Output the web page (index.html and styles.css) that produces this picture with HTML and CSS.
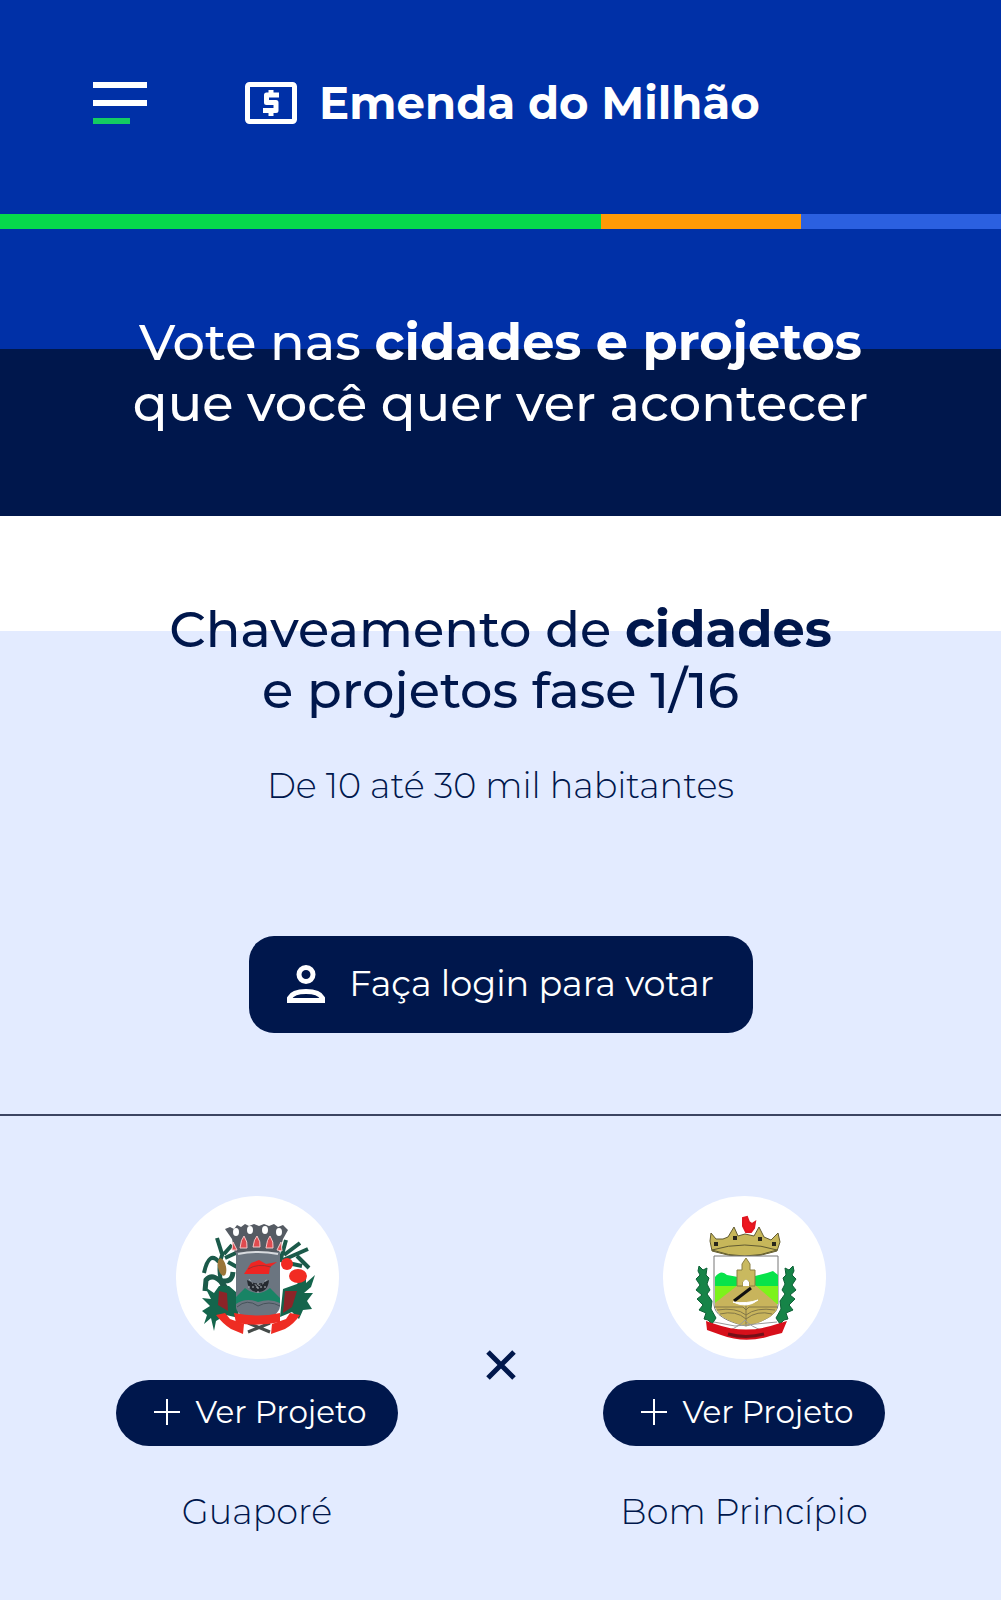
FILE: index.html
```
<!DOCTYPE html>
<html lang="pt-BR">
<head>
  <meta charset="UTF-8">
  <meta name="viewport" content="width=device-width, initial-scale=1.0">
  <title>Emenda do Milhão</title>
  <link rel="stylesheet" href="styles.css">
</head>
<body>
  <header class="topbar">
    <button class="menu" type="button" aria-label="Abrir menu">
      <span></span>
      <span></span>
      <span class="short"></span>
    </button>
    <a class="brand" href="#">
      <svg class="brand-icon" viewBox="0 0 52 42" aria-hidden="true">
        <rect x="2.500" y="2.500" width="47" height="37" rx="2" fill="none" stroke="#fff" stroke-width="5"/>
        <path d="M34 13H21.500V20.500H31V28.500H18M26 8V13M26 29V34" fill="none" stroke="#fff" stroke-width="5" stroke-linejoin="round"/>
      </svg>
      Emenda do Milhão
    </a>
  </header>

  <div class="stripe">
    <span class="green"></span>
    <span class="orange"></span>
    <span class="blue"></span>
  </div>

  <main>
    <section class="hero">
      <h1>Vote nas <strong>cidades e projetos</strong><br>que você quer ver acontecer</h1>
    </section>

    <section class="bracket">
      <h2>Chaveamento de <strong>cidades</strong><br>e projetos fase 1/16</h2>
      <p class="range">De 10 até 30 mil habitantes</p>
      <button class="login" type="button">
        <svg class="login-icon" viewBox="0 0 38 38" aria-hidden="true">
          <circle cx="19" cy="9.500" r="7" fill="none" stroke="#fff" stroke-width="5"/>
          <path d="M2.500 35.500V33C5 28 12 26.500 19 26.500S33 28 35.500 33V35.500Z" fill="none" stroke="#fff" stroke-width="5"/>
        </svg>
        Faça login para votar
      </button>
    </section>

    <section class="match">
      <div class="city">
        <div class="crest">
          <svg viewBox="0 0 163 163" role="img" aria-label="Brasão de Guaporé">
            <!-- milho e folhas -->
            <g fill="none" stroke="#1b5a4a" stroke-width="4">
              <path d="M47 92Q40 72 47 57M43 66Q33 54 28 77M46 58L41 42M48 58L56 49M49 62L62 56M52 66L61 71"/>
              <path d="M50 92Q38 75 30 84L29 95M44 84Q56 88 57 76" stroke-width="5"/>
              <path d="M104 66L110 44M108 59L124 47M107 64L132 53M121 60L133 72M107 66L126 70"/>
            </g>
            <g fill="#14654c">
              <path d="M53 90L60 96L63 122L50 119L40 125L38 135L35 122L28 128L31 119L26 115L34 110L26 102L35 103L29 91L38 97L43 90Z"/>
              <path d="M107 93L121 88L130 77L130 87L139 79L135 91L128 97L137 97L131 105L136 113L127 114L123 123L116 116L104 121Z"/>
            </g>
            <ellipse cx="46" cy="71" rx="4" ry="9" fill="#9b7538" transform="rotate(-12 46 71)"/>
            <path d="M43 95L51 97L52 115L42 109Z" fill="#8c2428"/>
            <path d="M109 95L121 95L116 111L107 117Z" fill="#8c2428"/>
            <circle cx="111" cy="68" r="6" fill="#f22b22"/>
            <ellipse cx="122" cy="80" rx="9" ry="7" fill="#f22b22"/>
            <!-- coroa -->
            <path d="M49 33L54 31L58 33L61 29L65 31L69 28L73 30L78 28L83 30L88 28L93 30L98 28L102 31L107 29L112 34L107 43L103 57H59L56 43Z" fill="#555b63"/>
            <g fill="#fff">
              <ellipse cx="60" cy="36" rx="3" ry="4"/><ellipse cx="74" cy="34" rx="3" ry="4"/>
              <ellipse cx="89" cy="34" rx="3" ry="4"/><ellipse cx="103" cy="36" rx="3" ry="4"/>
            </g>
            <g fill="#e04b4f" stroke="#f1c7c9">
              <path d="M64 52Q65 43 68 40Q72 46 71 52Z"/><path d="M77 51Q78 43 81 40Q85 46 84 51Z"/><path d="M90 52Q91 43 94 40Q98 46 97 52Z"/><path d="M101 54L105 46L106 55Z"/><path d="M56 54L57 46L61 54Z"/>
            </g>
            <!-- escudo -->
            <path d="M60 56H104V110Q103 121 82 126Q62 121 60 112Z" fill="#6b7580"/>
            <path d="M62 58Q82 54 102 58" fill="none" stroke="#d8dbdf" stroke-width="2"/>
            <path d="M68 78L75 67L83 64L90 68L101 66L94 71L93 78Z" fill="#ee2523"/>
            <path d="M72 73Q82 67 95 71" fill="none" stroke="#9d3030"/>
            <path d="M71 84Q82 91 93 84Q92 96 82 96T71 84Z" fill="#252a30"/>
            <path d="M73 83Q82 96 91 83M72 91H92M82 87V97" fill="none" stroke="#b2b8be" stroke-dasharray="2 2"/>
            <path d="M60 101L69 92Q82 102 94 92L104 102V107Q94 102 82 106Q70 101 60 108Z" fill="#188465"/>
            <path d="M61 111Q71 102 82 110Q93 104 104 110" fill="none" stroke="#46535b"/>
            <!-- faixa -->
            <path d="M72 136L94 127M72 127L94 136" stroke="#454b49" stroke-width="3"/>
            <path d="M58 117Q82 122 104 117V126Q82 131 60 127Z" fill="#ee2c23"/>
            <path d="M40 119L49 117L54 123L68 128L67 138L55 133Q47 128 40 119Z" fill="#ee2c23"/>
            <path d="M124 119L114 117L110 123L96 128L95 138L109 133Q118 128 124 119Z" fill="#ee2c23"/>
          </svg>
        </div>
        <a class="project" href="#">
          <svg class="plus" viewBox="0 0 26 26" aria-hidden="true"><path d="M13 0V26M0 13H26" stroke="#fff" stroke-width="2"/></svg>
          Ver Projeto
        </a>
        <p class="name">Guaporé</p>
      </div>

      <svg class="versus" viewBox="0 0 30 30" role="img" aria-label="contra"><path d="M2 2L28 28M28 2L2 28" stroke="#00174c" stroke-width="5"/></svg>

      <div class="city">
        <div class="crest">
          <svg viewBox="0 0 163 163" role="img" aria-label="Brasão de Bom Princípio">
            <!-- galo -->
            <path d="M80 22L84 21L86 26L89 28L92 26L91 32L88 36H83L80 30Z" fill="#ee161f" stroke="#e01620" stroke-width="2"/>
            <!-- coroa -->
            <g fill="#c7b75a" stroke="#615b32">
              <path d="M48 37L53 43L60 43L65 41L71 31L75 40L82 38L91 40L96 31L101 41L108 44L115 37L117 46L114 55Q82 66 49 55L47 45Z"/>
              <path d="M49 54Q82 44 114 54Q82 66 49 54Z"/>
            </g>
            <path d="M51 48H55M70 42H74M95 43H99M109 48H113" stroke="#29271b" stroke-width="4"/>
            <!-- escudo -->
            <path d="M51 60H115V109Q114 122 83 130Q52 123 51 109Z" fill="#fff" stroke="#777"/>
            <path d="M52 81Q58 73 64 79L75 81L92 80L104 77L110 75L115 79V90H52Z" fill="#08e34a"/>
            <path d="M52 90H115V108H52Z" fill="#7cf31b"/>
            <path d="M75 89H92L114 108V113Q109 124 83 130Q56 124 52 111V107Z" fill="#c8b45c"/>
            <path d="M74 90V74H79V68L83 62L87 68V74H92V90H86V86Q83 82 80 86V90Z" fill="#c9b95f" stroke="#8a7e42"/>
            <path d="M80 90V86Q83 81 86 86V90Z" fill="#fff"/>
            <path d="M52 111H80L83 114L86 111H114M54 114Q73 111 83 119Q93 111 112 114M57 118Q73 114 83 123Q94 114 109 118M83 108V130" fill="none" stroke="#827747"/>
            <path d="M71 105L88 92" stroke="#111" stroke-width="3"/>
            <path d="M70 106Q84 113 95 104Q84 108 70 106Z" fill="#fff" stroke="#fff"/>
            <!-- ramos -->
            <g fill="#168448" stroke="#0d6035">
              <path d="M36 70L40 74L44 72L43 79L46 82L44 88L47 94L44 98L49 105L48 113L53 122L49 128L45 124L41 123L43 117L36 114L40 109L34 103L39 99L33 94L37 89L33 83L37 79L35 75Z"/>
              <path d="M130 70L126 74L122 72L123 79L120 82L122 88L119 94L122 98L117 105L118 113L113 122L117 128L121 124L125 123L123 117L130 114L126 109L132 103L127 99L133 94L129 89L133 83L129 79L131 75Z"/>
            </g>
            <path d="M51 126L72 130L114 126M65 135Q77 130 82 124Q88 131 101 135" fill="none" stroke="#999"/>
            <!-- faixa -->
            <path d="M43 125L52 128Q83 139 114 128L124 125L119 137L107 140Q82 148 58 139L44 134Z" fill="#d7101b"/>
            <path d="M65 138Q83 143 101 138" fill="none" stroke="#731018" stroke-width="3"/>
          </svg>
        </div>
        <a class="project" href="#">
          <svg class="plus" viewBox="0 0 26 26" aria-hidden="true"><path d="M13 0V26M0 13H26" stroke="#fff" stroke-width="2"/></svg>
          Ver Projeto
        </a>
        <p class="name">Bom Princípio</p>
      </div>
    </section>
  </main>
</body>
</html>
```
FILE: styles.css
```
* {
  box-sizing: border-box;
}
body {
  margin: 0;
  font-family: Montserrat, Inter, sans-serif;
  background: #e3ebff;
  color: #00174c;
}
button {
  font: inherit;
  border: none;
  cursor: pointer;
}
a {
  color: inherit;
  text-decoration: none;
}
h1, h2, p {
  margin: 0;
}

.topbar {
  display: flex;
  align-items: center;
  gap: 98px;
  padding: 77px 93px 85px;
  background: #0030a7;
  color: white;
}
.menu {
  display: flex;
  flex-direction: column;
  gap: 12px;
  width: 54px;
  padding: 0;
  background: none;
}
.menu span {
  height: 6px;
  background: white;
}
.menu .short {
  width: 37px;
  background: #14cc62;
}
.brand {
  display: flex;
  align-items: center;
  gap: 22px;
  font-size: 45px;
  line-height: 52px;
  font-weight: 700;
}
.brand-icon {
  width: 52px;
  height: 42px;
}

.stripe {
  display: grid;
  grid-template-columns: 3fr 1fr 1fr;
  height: 15px;
}
.green {
  background: #06d94b;
}
.orange {
  background: #ff9a05;
}
.blue {
  background: #2b60e0;
}

.hero,
.bracket {
  text-align: center;
}
h1, h2 {
  font-size: 51px;
  line-height: 61px;
  font-weight: 500;
}
.hero {
  padding: 83px 20px 82px;
  background: linear-gradient(#0030a7 120px, #00174c 120px);
  color: white;
}
.bracket {
  padding: 83px 20px 81px;
  background: linear-gradient(white 115px, #e3ebff 115px);
  border-bottom: 2px solid #3c4562;
}
.range {
  margin-top: 43px;
  font-size: 35px;
  line-height: 44px;
  font-weight: 300;
}
.login {
  display: flex;
  align-items: center;
  justify-content: center;
  gap: 24px;
  width: 504px;
  max-width: 100%;
  height: 97px;
  margin: 128px auto 0;
  padding: 0 0 2px;
  border-radius: 25px;
  background: #00174c;
  color: white;
  font-size: 35px;
}
.login-icon {
  width: 38px;
  height: 38px;
}

.match {
  display: flex;
  justify-content: space-between;
  align-items: center;
  padding: 80px 116px 60px;
}
.city {
  display: flex;
  flex-direction: column;
  align-items: center;
  width: 282px;
}
.crest {
  width: 163px;
  height: 163px;
  border-radius: 50%;
  background: white;
}
.project {
  display: flex;
  align-items: center;
  justify-content: center;
  gap: 16px;
  width: 100%;
  height: 66px;
  margin-top: 21px;
  padding: 0 0 2px 6px;
  border-radius: 33px;
  background: #00174c;
  color: white;
  font-size: 31px;
}
.plus {
  width: 26px;
  height: 26px;
}
.name {
  margin-top: 44px;
  font-size: 35px;
  line-height: 44px;
  font-weight: 300;
  white-space: nowrap;
}
.versus {
  width: 30px;
  height: 30px;
}
```
